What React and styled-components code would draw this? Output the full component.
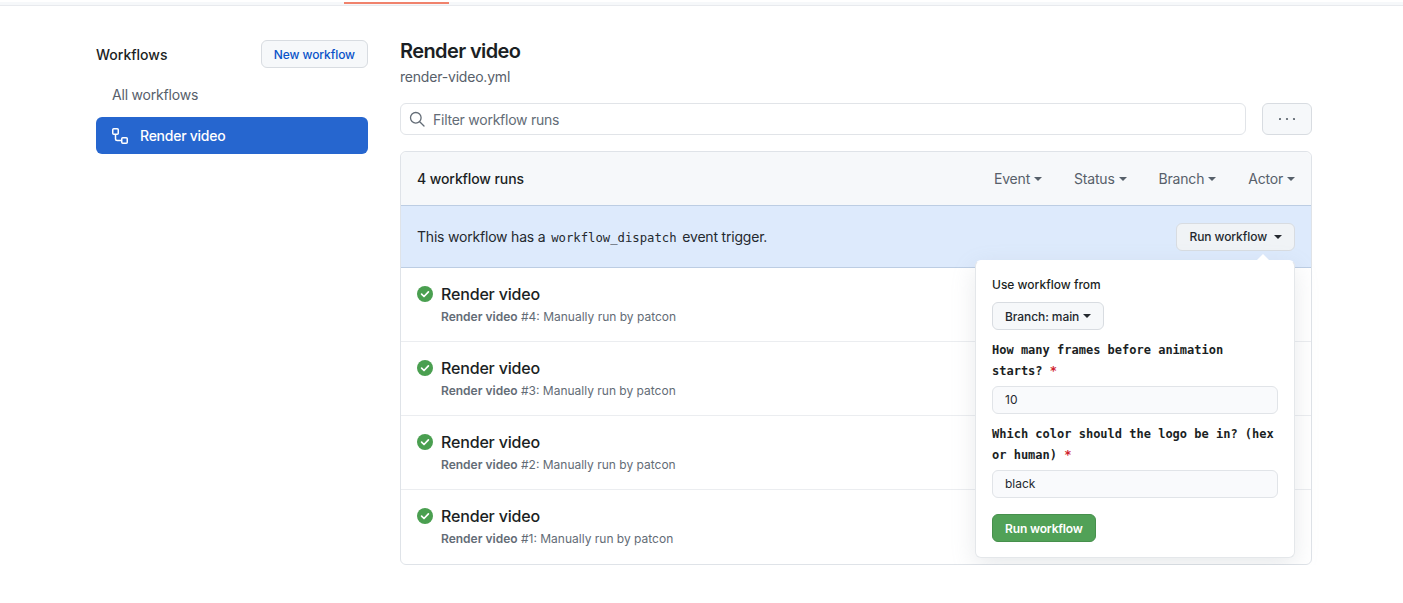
import styled, { createGlobalStyle } from "styled-components";

const GlobalStyle = createGlobalStyle`
    html, body {
        margin: 0;
        padding: 0;
        background: #ffffff;
        font-family: "Inter", "Liberation Sans", sans-serif;
        color: #24292f;
        overflow: hidden;
    }
`;

const TopBar = styled.div`
    height: 3px;
    background: #f6f8fa;
    border-bottom: 1px solid #e8eaee;
    padding-left: 344px;
`;

const ActiveTab = styled.div`
    width: 105px;
    height: 2px;
    margin-top: 2px;
    background: #f0826c;
`;

const Page = styled.div`
    display: grid;
    grid-template-columns: 272px 912px;
    column-gap: 32px;
    padding: 30px 0 0 96px;
`;

const Sidebar = styled.aside`
    display: flex;
    flex-direction: column;
`;

const SidebarHead = styled.div`
    display: flex;
    justify-content: space-between;
    align-items: center;
    height: 28px;
    margin-top: 4px;
`;

const SidebarTitle = styled.h2`
    margin: 1px 0 0;
    font-size: 14px;
    font-weight: 500;
    color: #1b1f24;
`;

const Button = styled.button`
    box-sizing: border-box;
    height: 28px;
    padding: 0 12px;
    border: 1px solid #d8dce1;
    border-radius: 6px;
    background: #f6f8fa;
    color: ${(p) => p.$color || "#24292f"};
    font-family: inherit;
    font-size: 12px;
    font-weight: 500;
    letter-spacing: -0.08px;
    display: inline-flex;
    align-items: center;
`;

const AllLink = styled.div`
    height: 36px;
    margin-top: 8px;
    padding-left: 16px;
    display: flex;
    align-items: center;
    font-size: 14px;
    letter-spacing: -0.2px;
    color: #57606a;
`;

const ActiveLink = styled.div`
    height: 37px;
    margin-top: 5px;
    padding-left: 16px;
    display: flex;
    align-items: center;
    gap: 12px;
    background: #2666cf;
    border-radius: 6px;
    color: #ffffff;
    font-size: 14px;
    font-weight: 500;
    letter-spacing: -0.25px;
`;

const Main = styled.main`
    display: flex;
    flex-direction: column;
`;

const Title = styled.h1`
    margin: 0;
    font-size: 20px;
    line-height: 30px;
    font-weight: 600;
    letter-spacing: -0.6px;
    color: #1b1f24;
`;

const FileName = styled.div`
    margin-top: 1px;
    font-size: 14px;
    line-height: 20px;
    letter-spacing: -0.2px;
    color: #57606a;
`;

const FilterRow = styled.div`
    display: flex;
    justify-content: space-between;
    margin-top: 16px;
`;

const Filter = styled.div`
    box-sizing: border-box;
    width: 846px;
    height: 32px;
    padding-left: 8px;
    display: flex;
    align-items: center;
    gap: 8px;
    border: 1px solid #e1e4e8;
    border-radius: 6px;
    font-size: 14px;
    letter-spacing: -0.25px;
    color: #636c76;
`;

const MoreButton = styled(Button)`
    width: 50px;
    height: 32px;
    justify-content: center;
    padding: 0;
`;

const Box = styled.section`
    position: relative;
    margin-top: 16px;
    height: 414px;
    box-sizing: border-box;
    border: 1px solid #dfe3e8;
    border-radius: 6px;
`;

const BoxHead = styled.div`
    box-sizing: border-box;
    height: 53px;
    padding: 0 16px;
    display: flex;
    align-items: center;
    justify-content: space-between;
    background: #f6f8fa;
    border-radius: 6px 6px 0 0;
`;

const RunCount = styled.div`
    font-size: 14px;
    font-weight: 500;
    letter-spacing: -0.1px;
    color: #1b1f24;
`;

const Filters = styled.div`
    display: flex;
    gap: 32px;
`;

const FilterItem = styled.div`
    display: flex;
    align-items: center;
    gap: 4px;
    font-size: 14px;
    letter-spacing: -0.2px;
    color: #57606a;
`;

const Caret = styled.span`
    display: inline-block;
    margin-left: ${(p) => p.$gap || 0}px;
    border-top: 4px solid currentColor;
    border-left: 4px solid transparent;
    border-right: 4px solid transparent;
`;

const Notice = styled.div`
    height: 61px;
    padding: 0 16px;
    display: flex;
    align-items: center;
    justify-content: space-between;
    background: #ddeafc;
    border-top: 1px solid #bccde3;
    border-bottom: 1px solid #bccde3;
    font-size: 14px;
    letter-spacing: -0.2px;
    color: #24292f;
`;

const NoticeButton = styled(Button)`
    background: #f0f3f6;
`;

const Code = styled.code`
    font-family: "DejaVu Sans Mono", "Liberation Mono", monospace;
    font-size: 12.25px;
    letter-spacing: 0;
    margin: 0 2px;
`;

const RunList = styled.div`
    display: flex;
    flex-direction: column;
`;

const Row = styled.div`
    height: 74px;
    box-sizing: border-box;
    padding: 17px 16px 0;
    display: flex;
    gap: 8px;
    border-bottom: 1px solid #ebedf0;

    &:last-child {
        border-bottom: 0;
    }
`;

const CheckWrap = styled.div`
    width: 16px;
    height: 16px;
    padding-top: 1px;
`;

const RunTitle = styled.div`
    font-size: 16px;
    line-height: 18px;
    font-weight: 500;
    letter-spacing: -0.17px;
    color: #1b1f24;
`;

const RunMeta = styled.div`
    margin-top: 5px;
    font-size: 12px;
    line-height: 18px;
    color: #636c76;

    b {
        font-weight: 600;
    }
`;

const Popup = styled.div`
    position: absolute;
    top: 108px;
    left: 574px;
    width: 320px;
    height: 298px;
    box-sizing: border-box;
    padding: 16px;
    background: #ffffff;
    border: 1px solid #e4e7ea;
    border-top-color: #ffffff;
    border-radius: 6px;
    box-shadow: 0 8px 24px rgba(140, 149, 159, 0.2);

    &::before {
        content: "";
        position: absolute;
        top: -7px;
        left: 280px;
        border-bottom: 7px solid #ffffff;
        border-left: 7px solid transparent;
        border-right: 7px solid transparent;
    }
`;

const FromLabel = styled.div`
    font-size: 12px;
    line-height: 16px;
    font-weight: 500;
    color: #1b1f24;
`;

const BranchButton = styled(Button)`
    margin-top: 9px;
    gap: 4px;
`;

const FieldLabel = styled.div`
    margin-top: 10px;
    font-family: "DejaVu Sans Mono", "Liberation Mono", monospace;
    font-size: 12px;
    line-height: 21px;
    font-weight: 600;
    color: #1b1f24;

    i {
        font-style: normal;
        color: #cf222e;
    }
`;

const Field = styled.div`
    box-sizing: border-box;
    margin-top: 4px;
    width: 286px;
    height: 28px;
    padding: 0 0 1px 12px;
    display: flex;
    align-items: center;
    background: #f9fafc;
    border: 1px solid #e1e4e8;
    border-radius: 6px;
    font-size: 12px;
    color: #24292f;
`;

const SubmitButton = styled(Button)`
    margin-top: 16px;
    background: #51a157;
    border-color: #46904c;
    color: #ffffff;
    font-weight: 600;
    letter-spacing: -0.15px;
`;

const CheckIcon = () => (
    <svg width="16" height="16" viewBox="0 0 16 16">
        <circle cx="8" cy="8" r="8" fill="#4a9f50" />
        <path d="M4.6 8.2 7 10.5l4.4-4.6" fill="none" stroke="#fff" strokeWidth="1.7" strokeLinecap="round" strokeLinejoin="round" />
    </svg>
);

const SearchIcon = () => (
    <svg width="16" height="16" viewBox="0 0 16 16" fill="none" stroke="#636c76" strokeWidth="1.3">
        <circle cx="6.8" cy="6.8" r="5.3" />
        <path d="M10.7 10.7 15 15" strokeLinecap="round" />
    </svg>
);

const WorkflowIcon = () => (
    <svg width="16" height="16" viewBox="0 0 16 16" fill="none" stroke="#fff" strokeWidth="1.5">
        <rect x="0.75" y="0.75" width="5.5" height="5.5" rx="1" />
        <rect x="9.75" y="9.75" width="5.5" height="5.5" rx="1" />
        <path d="M3.5 6.5v4.25c0 1 .6 1.75 1.75 1.75H9.5" />
    </svg>
);

const KebabIcon = () => (
    <svg width="16" height="16" viewBox="0 0 16 16" fill="#57606a">
        <circle cx="1" cy="8" r="1.1" />
        <circle cx="8" cy="8" r="1.1" />
        <circle cx="15" cy="8" r="1.1" />
    </svg>
);

const runs = [4, 3, 2, 1];
const filters = ["Event", "Status", "Branch", "Actor"];

const App = () => {
    return (
        <>
            <GlobalStyle />
            <TopBar>
                <ActiveTab />
            </TopBar>
            <Page>
                <Sidebar>
                    <SidebarHead>
                        <SidebarTitle>Workflows</SidebarTitle>
                        <Button $color="#0a53c9">New workflow</Button>
                    </SidebarHead>
                    <AllLink>All workflows</AllLink>
                    <ActiveLink>
                        <WorkflowIcon />
                        Render video
                    </ActiveLink>
                </Sidebar>

                <Main>
                    <Title>Render video</Title>
                    <FileName>render-video.yml</FileName>

                    <FilterRow>
                        <Filter>
                            <SearchIcon />
                            Filter workflow runs
                        </Filter>
                        <MoreButton aria-label="More">
                            <KebabIcon />
                        </MoreButton>
                    </FilterRow>

                    <Box>
                        <BoxHead>
                            <RunCount>4 workflow runs</RunCount>
                            <Filters>
                                {filters.map((name) => (
                                    <FilterItem key={name}>
                                        {name}
                                        <Caret />
                                    </FilterItem>
                                ))}
                            </Filters>
                        </BoxHead>

                        <Notice>
                            <div>
                                This workflow has a <Code>workflow_dispatch</Code> event trigger.
                            </div>
                            <NoticeButton>
                                Run workflow
                                <Caret $gap={7} />
                            </NoticeButton>
                        </Notice>

                        <RunList>
                            {runs.map((n) => (
                                <Row key={n}>
                                    <CheckWrap>
                                        <CheckIcon />
                                    </CheckWrap>
                                    <div>
                                        <RunTitle>Render video</RunTitle>
                                        <RunMeta>
                                            <b>Render video</b> #{n}: Manually run by patcon
                                        </RunMeta>
                                    </div>
                                </Row>
                            ))}
                        </RunList>

                        <Popup>
                            <FromLabel>Use workflow from</FromLabel>
                            <BranchButton>
                                Branch: main
                                <Caret />
                            </BranchButton>
                            <FieldLabel>
                                How many frames before animation
                                <br />
                                starts? <i>*</i>
                            </FieldLabel>
                            <Field>10</Field>
                            <FieldLabel>
                                Which color should the logo be in? (hex
                                <br />
                                or human) <i>*</i>
                            </FieldLabel>
                            <Field>black</Field>
                            <SubmitButton>Run workflow</SubmitButton>
                        </Popup>
                    </Box>
                </Main>
            </Page>
        </>
    );
};

export default App;
